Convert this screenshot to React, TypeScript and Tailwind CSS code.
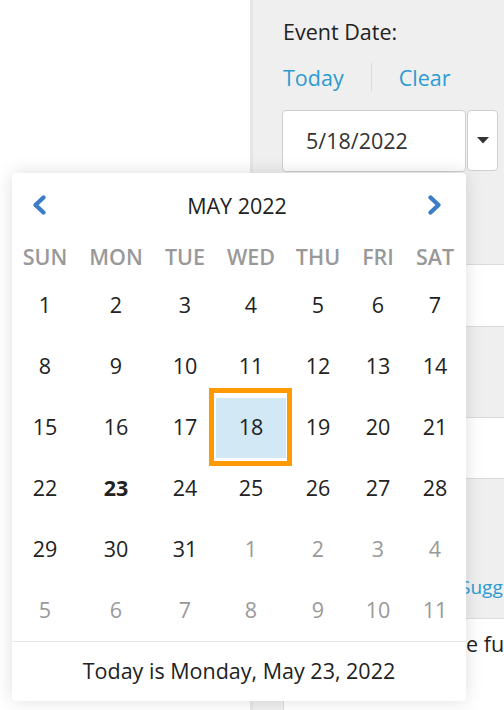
import React from "react";

const COLS = "grid-cols-[66px_76px_62px_70px_64px_56px_58px]";

type Day = { n: number; other?: boolean; bold?: boolean; sel?: boolean };

const weeks: Day[][] = [
  [1, 2, 3, 4, 5, 6, 7].map((n) => ({ n })),
  [8, 9, 10, 11, 12, 13, 14].map((n) => ({ n })),
  [15, 16, 17, 18, 19, 20, 21].map((n) => ({ n, sel: n === 18 })),
  [22, 23, 24, 25, 26, 27, 28].map((n) => ({ n, bold: n === 23 })),
  [
    { n: 29 },
    { n: 30 },
    { n: 31 },
    { n: 1, other: true },
    { n: 2, other: true },
    { n: 3, other: true },
    { n: 4, other: true },
  ],
  [5, 6, 7, 8, 9, 10, 11].map((n) => ({ n, other: true })),
];

const dayNames = ["SUN", "MON", "TUE", "WED", "THU", "FRI", "SAT"];

function Chevron({ dir }: { dir: "left" | "right" }) {
  return (
    <svg width="16" height="22" viewBox="0 0 16 22" className="block">
      <path
        d={dir === "left" ? "M12.5 3.5 L4.5 11 L12.5 18.5" : "M3.5 3.5 L11.5 11 L3.5 18.5"}
        fill="none"
        stroke="#3b7dc6"
        strokeWidth="4.4"
        strokeLinejoin="round"
        strokeLinecap="round"
      />
    </svg>
  );
}

export default function App() {
  return (
    <div className="relative w-[504px] h-[710px] overflow-hidden bg-white flex font-['Open_Sans',sans-serif] text-[21.5px] text-[#222]">
      <div className="w-[250px] shrink-0 bg-white" />
      <div className="w-[3px] shrink-0 bg-[#e6e6e6]" />
      <div className="flex-1 bg-[#efefef] flex flex-col">
        <div className="pl-[30px] pt-[17px]">
          <div className="leading-[29px] text-[#222]">Event Date:</div>
          <div className="mt-[16px] h-[30px] flex items-center leading-[29px] text-[#2b9bd2]">
            <span>Today</span>
            <span className="ml-[27px] mr-[27px] w-px h-[29px] bg-[#dcdcdc]" />
            <span>Clear</span>
          </div>
          <div className="mt-[18px] -ml-px flex">
            <div className="w-[184px] h-[62px] bg-white border border-[#cfcfcf] rounded-[4px] flex items-center pl-[23px] text-[#333]">
              5/18/2022
            </div>
            <div className="ml-px w-[31px] h-[61px] bg-white border border-[#cfcfcf] rounded-[4px] flex items-center justify-center">
              <svg width="12" height="7" viewBox="0 0 12 7">
                <path d="M0 0 H12 L6 6.5 Z" fill="#333" />
              </svg>
            </div>
          </div>
        </div>
        <div className="mt-[92px] ml-[30px] h-[62px] border-t border-[#dcdcdc] bg-white" />
        <div className="ml-[30px] h-[91px] border-t border-[#dcdcdc] bg-[#efefef]" />
        <div className="ml-[30px] h-[62px] border-y border-[#dcdcdc] bg-white" />
        <div className="ml-[30px] h-[139px] bg-[#efefef] pl-[177px] pt-[96px] text-[19px] leading-[24px] text-[#2b9bd2] whitespace-nowrap">
          Sugg
        </div>
        <div className="ml-[30px] flex-1 border-t border-l border-[#dcdcdc] bg-white pl-[182px] pt-[10px] leading-[29px] whitespace-nowrap">
          e fu
        </div>
      </div>

      <div className="absolute left-[12px] top-[173px] w-[454px] h-[528px] bg-white rounded-[4px] shadow-[0_0_18px_rgba(0,0,0,0.13)] flex flex-col">
        <div className="h-[64px] flex items-center justify-between pl-[19px] pr-[23px]">
          <Chevron dir="left" />
          <div className="leading-[29px] text-[#222]">MAY 2022</div>
          <Chevron dir="right" />
        </div>
        <div className={`grid ${COLS} h-[38px] items-center`}>
          {dayNames.map((d) => (
            <div key={d} className="text-center font-semibold text-[#999] leading-[29px]">
              {d}
            </div>
          ))}
        </div>
        {weeks.map((w, i) => (
          <div key={i} className={`grid ${COLS} h-[61px]`}>
            {w.map((d, j) => (
              <div key={j} className="flex items-center justify-center">
                {d.sel ? (
                  <div className="relative w-full h-[60px] bg-[#d2e8f5] flex items-center justify-center text-[#222]">
                    {d.n}
                    <div className="absolute -top-[10px] -bottom-[8px] -left-[7px] -right-[6px] border-[5px] border-[#ff9900] pointer-events-none" />
                  </div>
                ) : (
                  <span
                    className={
                      (d.other ? "text-[#999]" : "text-[#222]") +
                      (d.bold ? " font-bold" : "")
                    }
                  >
                    {d.n}
                  </span>
                )}
              </div>
            ))}
          </div>
        ))}
        <div className="flex-1 border-t border-[#e8e8e8] flex items-center justify-center text-[#222]">
          Today is Monday, May 23, 2022
        </div>
      </div>
    </div>
  );
}
